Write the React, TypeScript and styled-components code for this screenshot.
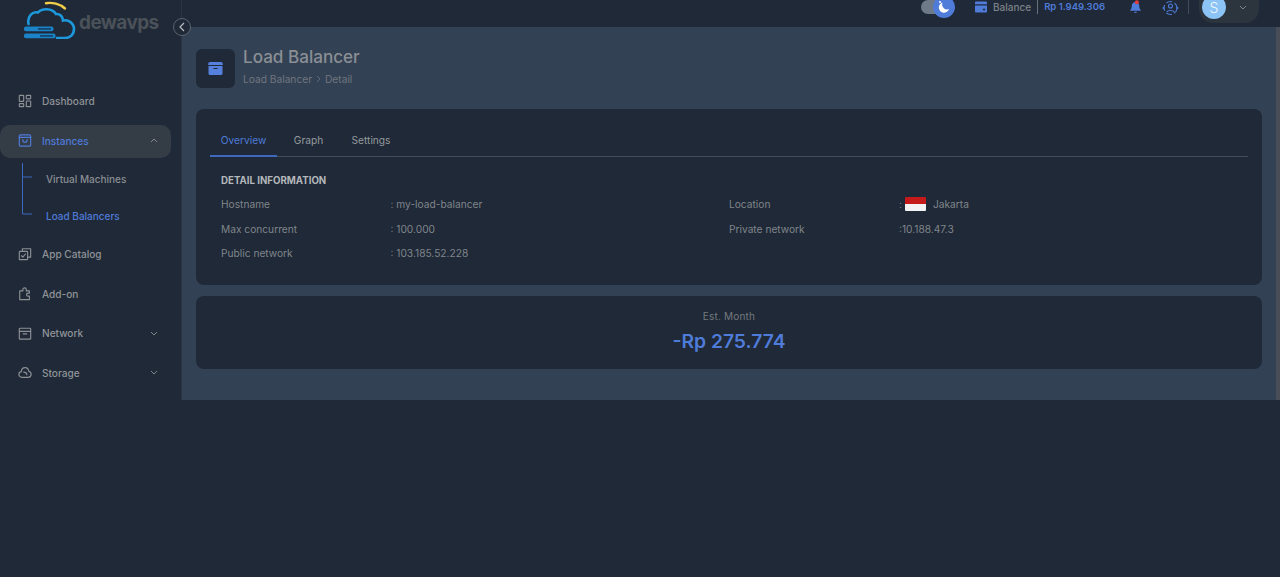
import React from "react";
import styled, { createGlobalStyle } from "styled-components";

const Global = createGlobalStyle`
  html, body { margin: 0; padding: 0; background: #1f2937; height: 100%; }
  body { font-family: Inter, "Noto Sans", sans-serif; overflow: hidden; }
  * { box-sizing: border-box; }
`;

const Page = styled.div`
  width: 1280px;
  height: 400px;
  display: flex;
  background: #1f2937;
`;

const Sidebar = styled.aside`
  position: relative;
  width: 182px;
  flex: none;
  border-right: 1px solid #2a3442;
`;

const Brand = styled.div`
  height: 85px;
  display: flex;
  align-items: flex-start;
  padding: 1px 0 0 24px;
  gap: 3px;
`;

const BrandName = styled.span`
  font-family: Inter, sans-serif;
  font-size: 19px;
  line-height: 24px;
  margin-top: 10px;
  font-weight: 700;
  letter-spacing: -0.6px;
  color: #4b5159;
`;

const Collapse = styled.button`
  position: absolute;
  right: -10px;
  top: 18px;
  width: 18px;
  height: 18px;
  padding: 0;
  border-radius: 50%;
  border: 1px solid #5b6470;
  background: #1f2937;
  color: #a3a8ae;
  display: flex;
  align-items: center;
  justify-content: center;
  z-index: 2;
`;

const Nav = styled.nav`
  display: flex;
  flex-direction: column;
`;

const NavItem = styled.div<{ $active?: boolean; $gap?: number }>`
  height: 33px;
  width: 171px;
  margin-bottom: ${(p) => p.$gap ?? 7}px;
  display: flex;
  align-items: center;
  padding: 0 13px 2px 18px;
  border-radius: 10px;
  gap: 10px;
  font-size: 10.1px;
  font-weight: 500;
  color: ${(p) => (p.$active ? "#4f7bd9" : "#8f9398")};
  background: ${(p) => (p.$active ? "#343c46" : "transparent")};
`;

const NavIcon = styled.span`
  width: 14px;
  height: 16px;
  flex: none;
  display: flex;
  align-items: center;
  justify-content: center;
`;

const NavLabel = styled.span`
  flex: 1;
`;

const SubMenu = styled.div`
  position: relative;
  height: 77px;
  margin-top: 2px;
  margin-bottom: 1px;
  padding-left: 46px;
  display: flex;
  flex-direction: column;
`;

const SubLine = styled.svg`
  position: absolute;
  left: 21px;
  top: 3px;
`;

const SubItem = styled.div<{ $active?: boolean }>`
  height: 37px;
  display: flex;
  align-items: center;
  font-size: 10px;
  font-weight: 500;
  color: ${(p) => (p.$active ? "#4f7bd9" : "#8a8e94")};
`;

const Column = styled.div`
  flex: 1;
  min-width: 0;
  display: flex;
  flex-direction: column;
`;

const Topbar = styled.header`
  height: 27px;
  display: flex;
  align-items: flex-start;
  justify-content: flex-end;
  padding-right: 21px;
  flex: none;
  overflow: hidden;
`;

const ToggleWrap = styled.div`
  position: relative;
  width: 26px;
  height: 14px;
  margin-right: 28px;
  background: #6f7a88;
  border-radius: 7px;
`;

const ToggleKnob = styled.div`
  position: absolute;
  right: -8px;
  top: -4px;
  width: 22px;
  height: 22px;
  background: #4f7bd9;
  border-radius: 50%;
  display: flex;
  align-items: center;
  justify-content: center;
`;

const BalanceBox = styled.div`
  display: flex;
  align-items: center;
  height: 14px;
  margin-right: 24px;
`;

const BalanceLabel = styled.span`
  font-size: 10px;
  font-weight: 500;
  color: #7d8288;
  margin: 0 6px 0 6px;
`;

const BalanceValue = styled.span`
  border-left: 1px solid #6b7078;
  padding-left: 6px;
  font-size: 9.5px;
  font-weight: 600;
  color: #4f7bd9;
  line-height: 14px;
`;

const IconSlot = styled.div<{ $mr: number }>`
  margin-right: ${(p) => p.$mr}px;
  height: 16px;
  display: flex;
  position: relative;
`;

const Divider = styled.div`
  width: 1px;
  height: 14px;
  background: #434b57;
  margin-right: 10px;
`;

const UserPill = styled.div`
  width: 60px;
  height: 23px;
  padding-left: 3px;
  background: #2c343e;
  border-radius: 0 0 14px 14px;
  display: flex;
  align-items: flex-start;
  gap: 13px;
`;

const Avatar = styled.div`
  width: 24px;
  height: 24px;
  margin-top: -5px;
  border-radius: 50%;
  background: #8cc4f5;
  color: #eef5fb;
  font-size: 14px;
  font-weight: 300;
  display: flex;
  align-items: center;
  justify-content: center;
`;

const PillChevron = styled.span`
  display: flex;
  margin-top: 5px;
`;

const ContentRow = styled.div`
  flex: 1;
  display: flex;
  min-height: 0;
`;

const Main = styled.main`
  flex: 1;
  background: #334155;
  border-top-left-radius: 8px;
  padding: 22px 14px 0;
  display: flex;
  flex-direction: column;
`;

const ScrollTrack = styled.div`
  width: 4px;
  flex: none;
  background: #484d57;
`;

const TitleRow = styled.div`
  display: flex;
  gap: 8px;
  height: 60px;
`;

const TitleIcon = styled.div`
  width: 39px;
  height: 39px;
  border-radius: 6px;
  background: #1f2937;
  display: flex;
  align-items: center;
  justify-content: center;
`;

const TitleText = styled.div`
  display: flex;
  flex-direction: column;
`;

const Title = styled.h1`
  margin: -1px 0 0;
  font-size: 17.1px;
  line-height: 18px;
  font-weight: 500;
  color: #8b8f94;
`;

const Crumbs = styled.div`
  margin-top: 7px;
  display: flex;
  align-items: center;
  gap: 4px;
  font-size: 10.2px;
  font-weight: 400;
  color: #6f767e;
`;

const Card = styled.section`
  background: #1f2937;
  border-radius: 8px;
`;

const DetailCard = styled(Card)`
  height: 176px;
  padding: 16px 14px 0;
`;

const Tabs = styled.div`
  display: flex;
  height: 32px;
  border-bottom: 1px solid #444c58;
`;

const Tab = styled.div<{ $active?: boolean; $w: number }>`
  width: ${(p) => p.$w}px;
  height: 32px;
  display: flex;
  justify-content: center;
  align-items: center;
  font-size: 10.2px;
  font-weight: 400;
  color: ${(p) => (p.$active ? "#4f7bd9" : "#95999e")};
  border-bottom: 2px solid ${(p) => (p.$active ? "#3f68bf" : "transparent")};
`;

const SectionTitle = styled.h2`
  margin: 17px 0 0 11px;
  font-size: 9.7px;
  line-height: 14px;
  font-weight: 700;
  color: #b3b7bb;
`;

const InfoGrid = styled.div`
  display: grid;
  grid-template-columns: 508px 1fr;
  margin: 4px 0 0 11px;
`;

const InfoCol = styled.div`
  display: flex;
  flex-direction: column;
`;

const InfoRow = styled.div`
  display: flex;
  height: 24.5px;
  align-items: center;
  font-size: 10.2px;
  color: #80858b;
`;

const InfoKey = styled.span<{ $w: number }>`
  width: ${(p) => p.$w}px;
  flex: none;
`;

const Flag = styled.span`
  display: inline-flex;
  flex-direction: column;
  width: 21px;
  height: 14px;
  border-radius: 1px;
  overflow: hidden;
  margin: 0 7px 0 3px;
`;

const FlagRed = styled.span`
  flex: 1;
  background: #c51a1a;
`;

const FlagWhite = styled.span`
  flex: 1;
  background: #f3f3f3;
`;

const CostCard = styled(Card)`
  height: 73px;
  margin-top: 11px;
  display: flex;
  flex-direction: column;
  align-items: center;
  padding-top: 14px;
`;

const CostLabel = styled.div`
  font-size: 10px;
  line-height: 13px;
  color: #74797f;
  letter-spacing: 0.2px;
`;

const CostValue = styled.div`
  font-size: 19.3px;
  line-height: 26px;
  margin-top: 5px;
  font-weight: 600;
  color: #4f7bd9;
`;

const Ico = ({ children, size = 16, color = "#8d9195", sw = 1.3 }: { children: React.ReactNode; size?: number; color?: string; sw?: number }) => (
  <svg width={size} height={size} viewBox="0 0 16 16" fill="none" stroke={color} strokeWidth={sw} strokeLinecap="round" strokeLinejoin="round">
    {children}
  </svg>
);

const Chevron = ({ up }: { up?: boolean }) => (
  <svg width="8" height="5" viewBox="0 0 8 5" fill="none" stroke="#8a8e93" strokeWidth="0.9">
    <path d={up ? "M1 4l3-3 3 3" : "M1 1l3 3 3-3"} />
  </svg>
);

const Logo = () => (
  <svg width="52" height="38" viewBox="0 0 52 38" fill="none">
    <path d="M22 2.2C28 1 36 3 41 7.5" stroke="#f2cf4a" strokeWidth="2.4" strokeLinecap="round" />
    <path d="M4.500 23C3 15 9 10 14 11.500C18 7 28 7 32 13C36 12.500 39 16 39 19.500C45 18 50 23 50 28C50 33.500 46 37 41 37H33" stroke="#1d98dc" strokeWidth="2.600" strokeLinecap="round" />
    <rect x="0" y="25.500" width="29.500" height="4.800" rx="2" fill="#1b84c8" />
    <rect x="0" y="32.500" width="31.500" height="4.800" rx="2" fill="#1b84c8" />
    <rect x="14" y="27" width="13" height="1.800" fill="#14466e" />
    <rect x="16" y="34" width="13" height="1.800" fill="#14466e" />
  </svg>
);

const DashIcon = () => (
  <Ico size={14}>
    <rect x="1.5" y="1.5" width="5" height="7" rx="0.6" />
    <rect x="9.5" y="1.5" width="5" height="4" rx="0.6" />
    <rect x="1.5" y="11" width="5" height="3.5" rx="0.6" />
    <rect x="9.5" y="8" width="5" height="6.5" rx="0.6" />
  </Ico>
);
const BagIcon = () => (
  <Ico size={15} color="#4f7bd9">
    <rect x="1.5" y="1.5" width="13" height="13" rx="1.5" />
    <path d="M1.5 4.500h13M5.500 7c0 4 5 4 5 0" />
  </Ico>
);
const CatalogIcon = () => (
  <Ico size={16}>
    <rect x="1.5" y="5" width="9.5" height="9.5" rx="0.8" />
    <path d="M5 5V2h9.500v9.500H11M4 10l1.500 1.500L8.500 8" />
  </Ico>
);
const PuzzleIcon = () => (
  <Ico size={16}>
    <path d="M2 4.500h3.500V3a2 2 0 0 1 4 0v1.500H13V7h-1.500a1.700 1.700 0 0 0 0 3.500H13v4H2z" />
  </Ico>
);
const BoxIcon = () => (
  <Ico size={15}>
    <rect x="1.5" y="2" width="13" height="12.5" rx="0.8" />
    <path d="M1.500 5.500h13M6 8.500h4" />
  </Ico>
);
const CloudIcon = () => (
  <Ico size={17}>
    <path d="M4.500 13.500C2 13.500 1 11.800 1 10.200C1 8.500 2.200 7.300 3.800 7C4 4.200 6 2.500 8.200 2.500C10.400 2.500 12 4.300 12.200 6.500C13.800 7 15 8.200 15 10C15 12 13.500 13.500 11.500 13.500ZM6.500 7.500C8.500 7.500 10 8.700 10.200 10.500" />
  </Ico>
);

export default function App() {
  return (
    <>
      <Global />
      <Page>
        <Sidebar>
          <Brand>
            <Logo />
            <BrandName>dewavps</BrandName>
          </Brand>
          <Collapse aria-label="collapse">
            <svg width="6" height="10" viewBox="0 0 6 10" fill="none" stroke="#b8bcc0" strokeWidth="1.2">
              <path d="M5 1L1 5l4 4" />
            </svg>
          </Collapse>
          <Nav>
            <NavItem $gap={7}><NavIcon><DashIcon /></NavIcon><NavLabel>Dashboard</NavLabel></NavItem>
            <NavItem $active $gap={0}><NavIcon><BagIcon /></NavIcon><NavLabel>Instances</NavLabel><Chevron up /></NavItem>
            <SubMenu>
              <SubLine width="12" height="76" viewBox="0 0 12 76" fill="none" stroke="#3f68bf" strokeWidth="1">
                <path d="M1.500 0V51M1.500 14H11M1.500 51H11" />
              </SubLine>
              <SubItem>Virtual Machines</SubItem>
              <SubItem $active>Load Balancers</SubItem>
            </SubMenu>
            <NavItem $gap={7}><NavIcon><CatalogIcon /></NavIcon><NavLabel>App Catalog</NavLabel></NavItem>
            <NavItem $gap={6.5}><NavIcon><PuzzleIcon /></NavIcon><NavLabel>Add-on</NavLabel></NavItem>
            <NavItem $gap={6.5}><NavIcon><BoxIcon /></NavIcon><NavLabel>Network</NavLabel><Chevron /></NavItem>
            <NavItem $gap={0}><NavIcon><CloudIcon /></NavIcon><NavLabel>Storage</NavLabel><Chevron /></NavItem>
          </Nav>
        </Sidebar>
        <Column>
          <Topbar>
            <ToggleWrap>
              <ToggleKnob>
                <svg width="14" height="14" viewBox="0 0 14 14">
                  <path d="M5.500 2.500a5.200 5.200 0 1 0 6.500 6.500A5 5 0 0 1 5.500 2.500z" fill="#fff" />
                  <circle cx="3" cy="2" r="1" fill="#fff" />
                </svg>
              </ToggleKnob>
            </ToggleWrap>
            <BalanceBox>
              <svg width="12" height="12" viewBox="0 0 13 12">
                <path d="M1 0h11a1 1 0 0 1 1 1v2H0V1a1 1 0 0 1 1-1zM0 4.500h13V11a1 1 0 0 1-1 1H1a1 1 0 0 1-1-1zM8.500 8v1.500H11V8z" fill="#4f7bd9" fillRule="evenodd" />
              </svg>
              <BalanceLabel>Balance</BalanceLabel>
              <BalanceValue>Rp 1.949.306</BalanceValue>
            </BalanceBox>
            <IconSlot $mr={20}>
              <svg width="13" height="15" viewBox="0 0 14 15">
                <path d="M7 1.500c2.600 0 4 2 4 4.500 0 2.500 1 3.500 2 5H1c1-1.500 2-2.500 2-5 0-2.500 1.400-4.500 4-4.500z" fill="#4f7bd9" />
                <path d="M5.500 12h3a1.500 1.500 0 0 1-3 0z" fill="#4f7bd9" />
                <circle cx="8.500" cy="1.800" r="2.200" fill="#e23b3b" />
              </svg>
            </IconSlot>
            <IconSlot $mr={9}>
              <svg width="17" height="16" viewBox="0 0 17 16" fill="none" stroke="#4f7bd9" strokeWidth="1.1">
                <circle cx="8.500" cy="8" r="6.500" strokeDasharray="6 2.500" />
                <circle cx="8.500" cy="6" r="2" />
                <path d="M5 12c.5-2 6.500-2 7 0" />
                <circle cx="1.500" cy="8" r="1" fill="#4f7bd9" stroke="none" />
                <circle cx="15.500" cy="8" r="1" fill="#4f7bd9" stroke="none" />
              </svg>
            </IconSlot>
            <Divider />
            <UserPill>
              <Avatar>S</Avatar>
              <PillChevron><Chevron /></PillChevron>
            </UserPill>
          </Topbar>
          <ContentRow>
            <Main>
              <TitleRow>
                <TitleIcon>
                  <svg width="15" height="13" viewBox="0 0 15 13">
                    <path d="M2 0h11a2 2 0 0 1 1.800 2v1H.2V2A2 2 0 0 1 2 0zM.5 4h14v7.500A1.500 1.500 0 0 1 13 13H2a1.500 1.500 0 0 1-1.500-1.500zM5.500 6v1h4V6z" fill="#5680de" fillRule="evenodd" />
                  </svg>
                </TitleIcon>
                <TitleText>
                  <Title>Load Balancer</Title>
                  <Crumbs>
                    Load Balancer
                    <svg width="5" height="8" viewBox="0 0 5 8" fill="none" stroke="#6f767e" strokeWidth="0.8">
                      <path d="M1 1l3 3-3 3" />
                    </svg>
                    Detail
                  </Crumbs>
                </TitleText>
              </TitleRow>
              <DetailCard>
                <Tabs>
                  <Tab $active $w={67}>Overview</Tab>
                  <Tab $w={63}>Graph</Tab>
                  <Tab $w={62}>Settings</Tab>
                </Tabs>
                <SectionTitle>DETAIL INFORMATION</SectionTitle>
                <InfoGrid>
                  <InfoCol>
                    <InfoRow><InfoKey $w={169.5}>Hostname</InfoKey>: my-load-balancer</InfoRow>
                    <InfoRow><InfoKey $w={169.5}>Max concurrent</InfoKey>: 100.000</InfoRow>
                    <InfoRow><InfoKey $w={169.5}>Public network</InfoKey>: 103.185.52.228</InfoRow>
                  </InfoCol>
                  <InfoCol>
                    <InfoRow><InfoKey $w={170}>Location</InfoKey>:<Flag><FlagRed /><FlagWhite /></Flag>Jakarta</InfoRow>
                    <InfoRow><InfoKey $w={170}>Private network</InfoKey>:10.188.47.3</InfoRow>
                  </InfoCol>
                </InfoGrid>
              </DetailCard>
              <CostCard>
                <CostLabel>Est. Month</CostLabel>
                <CostValue>-Rp 275.774</CostValue>
              </CostCard>
            </Main>
            <ScrollTrack />
          </ContentRow>
        </Column>
      </Page>
    </>
  );
}
